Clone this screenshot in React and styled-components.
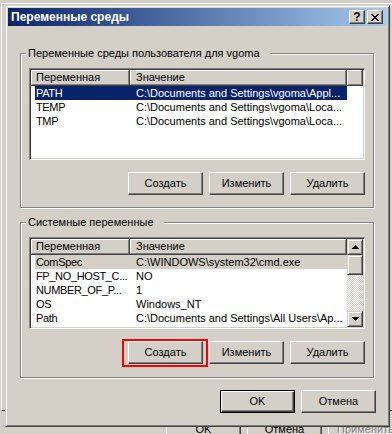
import React from 'react';
import styled, { createGlobalStyle, css } from 'styled-components';

const FACE = '#d4d0c8';

const GlobalStyle = createGlobalStyle`
  html, body {
    margin: 0;
    padding: 0;
    background: ${FACE};
  }
  * {
    box-sizing: border-box;
  }
`;

const Desktop = styled.div`
  position: relative;
  width: 392px;
  height: 434px;
  overflow: hidden;
  background: ${FACE};
  font-family: "Liberation Sans", Arial, sans-serif;
  font-size: 11px;
  color: #000;
`;

// window behind the dialog (only its edges show)
const ParentWindow = styled.div`
  position: absolute;
  left: 1px;
  top: 3px;
  width: 430px;
  display: flex;
  flex-direction: column;
`;

const ParentPanel = styled.div`
  height: 408px;
  border-top: 1px solid #fff;
  border-left: 1px solid #fff;
  border-bottom: 1px solid #404040;
`;

const ParentButtons = styled.div`
  display: flex;
  gap: 6px;
  margin-top: 7px;
  padding-left: 165px;
`;

const bevel = css`
  background: ${FACE};
  border: 1px solid;
  border-color: #fff #404040 #404040 #fff;
  box-shadow: inset -1px -1px #808080;
`;

const PushButton = styled.div`
  ${bevel};
  position: relative;
  flex: none;
  width: 75px;
  height: 23px;
  display: flex;
  align-items: center;
  justify-content: center;
  line-height: 13px;
  white-space: nowrap;

  ${p => p.$default && css`
    border: 1px solid #000;
    box-shadow: inset 1px 1px #fff, inset -1px -1px #404040, inset -2px -2px #808080;
  `}

  ${p => p.$disabled && css`
    color: #808080;
    text-shadow: 1px 1px #fff;
  `}

  ${p => p.$marked && css`
    &::after {
      content: '';
      position: absolute;
      left: -7px;
      right: -6px;
      top: -3px;
      bottom: -4px;
      border: 2px solid #f00;
    }
  `}
`;

const Dialog = styled.div`
  position: absolute;
  left: 5px;
  top: 5px;
  width: 385px;
  height: 422px;
  padding: 2px;
  background: ${FACE};
  border: 1px solid;
  border-color: ${FACE} #404040 #404040 ${FACE};
  box-shadow: inset 1px 1px #fff, inset -1px -1px #808080;
  display: flex;
  flex-direction: column;
`;

const TitleBar = styled.div`
  height: 18px;
  flex: none;
  display: flex;
  align-items: center;
  gap: 2px;
  padding: 0 4px 0 3px;
  background: linear-gradient(to right, #0a246a, #a6caf0);
`;

const Title = styled.div`
  flex: 1;
  color: #fff;
  font-weight: bold;
  font-size: 12px;
  white-space: nowrap;
`;

const CaptionButton = styled.div`
  ${bevel};
  width: 16px;
  height: 14px;
  display: flex;
  align-items: center;
  justify-content: center;
  font-weight: bold;
  font-size: 12px;
  line-height: 12px;
`;

const DialogBody = styled.div`
  flex: 1;
  display: flex;
  flex-direction: column;
  padding: 27px 13px 0 12px;
`;

const GroupBox = styled.div`
  position: relative;
  display: flex;
  flex-direction: column;
  margin-top: ${p => p.$gap || 0}px;
  padding: 14px 8px 0;
  border: 1px solid #808080;
  box-shadow: inset 1px 1px #fff, 1px 1px #fff;
`;

const Legend = styled.div`
  position: absolute;
  top: -7px;
  left: 5px;
  padding: 0 10px 0 2px;
  background: ${FACE};
  line-height: 13px;
  white-space: nowrap;
`;

const ListView = styled.div`
  height: 92px;
  display: flex;
  padding: 1px;
  background: #fff;
  border: 1px solid;
  border-color: #808080 #fff #fff #808080;
  box-shadow: inset 1px 1px #404040, inset -1px -1px ${FACE};
`;

const ListMain = styled.div`
  flex: 1;
  min-width: 0;
  overflow: hidden;
`;

const Header = styled.div`
  display: flex;
  height: 16px;
`;

const HeaderCell = styled.div`
  flex: ${p => (p.$w ? `0 0 ${p.$w}px` : '1')};
  height: 16px;
  padding-left: ${p => p.$pad || 0}px;
  background: ${FACE};
  border-right: 1px solid #404040;
  border-bottom: 1px solid #404040;
  box-shadow: inset 1px 1px #fff, inset -1px -1px #808080;
  line-height: 15px;
  white-space: nowrap;
  overflow: hidden;
`;

const Row = styled.div`
  display: flex;
  width: 312px;
  height: 14px;
  margin-left: 4px;
  line-height: 14px;
  white-space: nowrap;
  background: ${p => (p.$state === 'selected' ? '#0a246a' : p.$state === 'inactive' ? FACE : 'transparent')};
  color: ${p => (p.$state === 'selected' ? '#fff' : '#000')};
`;

const NameCell = styled.div`
  flex: 0 0 95px;
  padding-left: 1px;
  letter-spacing: -0.35px;
  overflow: hidden;
`;

const ValueCell = styled.div`
  flex: 0 0 217px;
  padding-left: 6px;
  overflow: hidden;
`;

const ScrollBar = styled.div`
  flex: 0 0 16px;
  display: flex;
  flex-direction: column;
`;

const ScrollButton = styled.div`
  flex: 0 0 ${p => p.$h || 16}px;
  display: flex;
  align-items: center;
  justify-content: center;
  background: ${FACE};
  border: 1px solid;
  border-color: ${FACE} #404040 #404040 ${FACE};
  box-shadow: inset 1px 1px #fff, inset -1px -1px #808080;
`;

const ScrollTrack = styled.div`
  flex: 1;
  background-color: #fff;
  background-image: conic-gradient(${FACE} 25%, #fff 0 50%, ${FACE} 0 75%, #fff 0);
  background-size: 2px 2px;
`;

const ButtonRow = styled.div`
  display: flex;
  justify-content: flex-end;
  gap: 6px;
  margin-top: 12px;
  padding-bottom: ${p => p.$bottom}px;
`;

const Footer = styled.div`
  display: flex;
  justify-content: flex-end;
  gap: 6px;
  margin-top: 12px;
  margin-right: -2px;
`;

const CloseGlyph = () => (
  <svg width="8" height="7" viewBox="0 0 8 7" shapeRendering="crispEdges">
    <path
      fill="#000"
      d="M0 0h2v1H0zM6 0h2v1H6zM1 1h2v1H1zM5 1h2v1H5zM2 2h4v1H2zM3 3h2v1H3zM2 4h4v1H2zM1 5h2v1H1zM5 5h2v1H5zM0 6h2v1H0zM6 6h2v1H6z"
    />
  </svg>
);

const Arrow = ({ down }) => (
  <svg width="7" height="4" viewBox="0 0 7 4" shapeRendering="crispEdges">
    <path
      fill="#000"
      d={down ? 'M0 0h7v1H0zM1 1h5v1H1zM2 2h3v1H2zM3 3h1v1H3z' : 'M3 0h1v1H3zM2 1h3v1H2zM1 2h5v1H1zM0 3h7v1H0z'}
    />
  </svg>
);

const userVars = [
  { name: 'PATH', value: 'C:\\Documents and Settings\\vgoma\\Appl...', state: 'selected' },
  { name: 'TEMP', value: 'C:\\Documents and Settings\\vgoma\\Loca...' },
  { name: 'TMP', value: 'C:\\Documents and Settings\\vgoma\\Loca...' },
];

const systemVars = [
  { name: 'ComSpec', value: 'C:\\WINDOWS\\system32\\cmd.exe', state: 'inactive' },
  { name: 'FP_NO_HOST_C...', value: 'NO' },
  { name: 'NUMBER_OF_P...', value: '1' },
  { name: 'OS', value: 'Windows_NT' },
  { name: 'Path', value: 'C:\\Documents and Settings\\All Users\\Ap...' },
];

const VarList = ({ items, scroll }) => (
  <ListView>
    <ListMain>
      <Header>
        <HeaderCell $w={99} $pad={5}>Переменная</HeaderCell>
        <HeaderCell $w={217} $pad={6}>Значение</HeaderCell>
        {!scroll && <HeaderCell />}
      </Header>
      {items.map(v => (
        <Row key={v.name} $state={v.state}>
          <NameCell>{v.name}</NameCell>
          <ValueCell>{v.value}</ValueCell>
        </Row>
      ))}
    </ListMain>
    {scroll && (
      <ScrollBar>
        <ScrollButton><Arrow /></ScrollButton>
        <ScrollButton $h={20} />
        <ScrollTrack />
        <ScrollButton><Arrow down /></ScrollButton>
      </ScrollBar>
    )}
  </ListView>
);

export default function App() {
  return (
    <>
      <GlobalStyle />
      <Desktop>
        <ParentWindow>
          <ParentPanel />
          <ParentButtons>
            <PushButton>OK</PushButton>
            <PushButton>Отмена</PushButton>
            <PushButton $disabled>Применить</PushButton>
          </ParentButtons>
        </ParentWindow>

        <Dialog>
          <TitleBar>
            <Title>Переменные среды</Title>
            <CaptionButton>?</CaptionButton>
            <CaptionButton><CloseGlyph /></CaptionButton>
          </TitleBar>

          <DialogBody>
            <GroupBox>
              <Legend>Переменные среды пользователя для vgoma</Legend>
              <VarList items={userVars} />
              <ButtonRow $bottom={12}>
                <PushButton>Создать</PushButton>
                <PushButton>Изменить</PushButton>
                <PushButton>Удалить</PushButton>
              </ButtonRow>
            </GroupBox>

            <GroupBox $gap={14}>
              <Legend>Системные переменные</Legend>
              <VarList items={systemVars} scroll />
              <ButtonRow $bottom={13}>
                <PushButton $marked>Создать</PushButton>
                <PushButton>Изменить</PushButton>
                <PushButton>Удалить</PushButton>
              </ButtonRow>
            </GroupBox>

            <Footer>
              <PushButton $default>OK</PushButton>
              <PushButton>Отмена</PushButton>
            </Footer>
          </DialogBody>
        </Dialog>
      </Desktop>
    </>
  );
}
